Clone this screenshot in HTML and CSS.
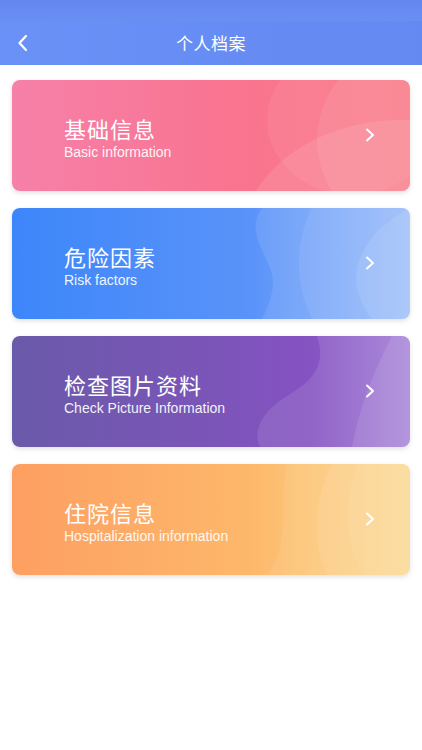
FILE: index.html
```html
<!DOCTYPE html>
<html lang="zh">
<head>
<meta charset="utf-8">
<title>个人档案</title>
<link rel="stylesheet" href="styles.css">
</head>
<body>
<header class="topbar">
  <div class="status"></div>
  <div class="navbar">
    <svg class="back" width="14" height="18" viewBox="0 0 14 18"><path d="M10 2 L3.5 9 L10 16" fill="none" stroke="#fff" stroke-width="2.2" stroke-linecap="round" stroke-linejoin="round"/></svg>
    <h1 class="title">个人档案</h1>
  </div>
</header>
<main class="list">
  <a class="card pink">
    <svg class="deco" viewBox="0 0 398 111" preserveAspectRatio="none">
      <ellipse cx="340" cy="40" rx="85" ry="75" fill="#fff" fill-opacity="0.06"/>
      <ellipse cx="400" cy="60" rx="95" ry="95" fill="#fff" fill-opacity="0.08"/>
      <ellipse cx="390" cy="160" rx="160" ry="120" fill="#fff" fill-opacity="0.1"/>
    </svg>
    <div class="text">
      <div class="cn">基础信息</div>
      <div class="en">Basic information</div>
    </div>
    <svg class="arrow" width="12" height="16" viewBox="0 0 12 16"><path d="M3 2.5 L9 8 L3 13.5" fill="none" stroke="#fff" stroke-width="2" stroke-linecap="round" stroke-linejoin="round"/></svg>
  </a>
  <a class="card blue">
    <svg class="deco" viewBox="0 0 398 111" preserveAspectRatio="none">
      <path d="M250 0 C235 20 250 40 258 60 C266 80 255 100 250 111 L398 111 L398 0 Z" fill="#fff" fill-opacity="0.1"/>
      <path d="M300 0 C280 40 285 80 300 111 L398 111 L398 0 Z" fill="#fff" fill-opacity="0.08"/>
      <path d="M398 0 C360 20 340 50 345 80 C348 95 355 105 360 111 L398 111 Z" fill="#fff" fill-opacity="0.1"/>
    </svg>
    <div class="text">
      <div class="cn">危险因素</div>
      <div class="en">Risk factors</div>
    </div>
    <svg class="arrow" width="12" height="16" viewBox="0 0 12 16"><path d="M3 2.5 L9 8 L3 13.5" fill="none" stroke="#fff" stroke-width="2" stroke-linecap="round" stroke-linejoin="round"/></svg>
  </a>
  <a class="card purple">
    <svg class="deco" viewBox="0 0 398 111" preserveAspectRatio="none">
      <path d="M305 0 C315 30 300 45 275 60 C250 75 240 95 248 111 L398 111 L398 0 Z" fill="#fff" fill-opacity="0.1"/>
      <path d="M380 0 C365 30 350 60 340 111 L398 111 L398 0 Z" fill="#fff" fill-opacity="0.1"/>
    </svg>
    <div class="text">
      <div class="cn">检查图片资料</div>
      <div class="en">Check Picture Information</div>
    </div>
    <svg class="arrow" width="12" height="16" viewBox="0 0 12 16"><path d="M3 2.5 L9 8 L3 13.5" fill="none" stroke="#fff" stroke-width="2" stroke-linecap="round" stroke-linejoin="round"/></svg>
  </a>
  <a class="card orange">
    <svg class="deco" viewBox="0 0 398 111" preserveAspectRatio="none">
      <path d="M275 0 C265 40 280 80 255 111 L398 111 L398 0 Z" fill="#fff" fill-opacity="0.07"/>
      <path d="M320 0 C300 40 300 80 315 111 L398 111 L398 0 Z" fill="#fff" fill-opacity="0.08"/>
      <path d="M345 0 C330 40 335 80 350 111 L398 111 L398 0 Z" fill="#fff" fill-opacity="0.06"/>
    </svg>
    <div class="text">
      <div class="cn">住院信息</div>
      <div class="en">Hospitalization information</div>
    </div>
    <svg class="arrow" width="12" height="16" viewBox="0 0 12 16"><path d="M3 2.5 L9 8 L3 13.5" fill="none" stroke="#fff" stroke-width="2" stroke-linecap="round" stroke-linejoin="round"/></svg>
  </a>
</main>
</body>
</html>
```

FILE: styles.css
```css
* { box-sizing: border-box; }
html, body { margin: 0; padding: 0; }
body {
  width: 422px;
  min-height: 750px;
  background: #ffffff;
  font-family: "Liberation Sans", "Noto Sans CJK SC", sans-serif;
}
.topbar {
  height: 65px;
  background: linear-gradient(90deg, #6991f6 0%, #6489f1 100%);
  display: flex;
  flex-direction: column;
}
.status {
  height: 21px;
  background: linear-gradient(180deg, #6386ee 0%, #6a8ff3 100%);
}
.navbar {
  position: relative;
  height: 44px;
  display: flex;
  align-items: center;
  justify-content: center;
}
.back {
  position: absolute;
  left: 16px;
  top: 13px;
}
.title {
  margin: 0;
  font-family: "Noto Sans CJK SC", sans-serif;
  font-weight: 400;
  font-size: 17px;
  color: #fff;
  letter-spacing: 0.5px;
  margin-top: -1px;
}
.list {
  padding: 15px 12px 0 12px;
  display: flex;
  flex-direction: column;
  gap: 17px;
}
.card {
  position: relative;
  height: 111px;
  border-radius: 8px;
  overflow: hidden;
  display: flex;
  align-items: center;
  padding: 0 0 0 52px;
  box-shadow: 0 2px 5px rgba(0,0,0,0.12);
}
.deco {
  position: absolute;
  inset: 0;
  width: 100%;
  height: 100%;
}
.text {
  position: relative;
  flex: 1;
  color: #fff;
}
.cn {
  font-family: "Noto Sans CJK SC", sans-serif;
  font-size: 22px;
  line-height: 32px;
  letter-spacing: 1px;
}
.en {
  font-family: "Liberation Sans", sans-serif;
  font-size: 14px;
  line-height: 16px;
  opacity: 0.92;
}
.arrow {
  position: relative;
  margin-right: 34px;
  margin-top: -2px;
}
.pink { background: linear-gradient(90deg, #f680a9 0%, #f97490 55%, #f97a85 100%); }
.blue { background: linear-gradient(90deg, #3d86fa 0%, #5a93f9 60%, #92b7f9 100%); }
.purple { background: linear-gradient(90deg, #6a5aaa 0%, #7b55b8 50%, #8552c2 75%, #a27dd6 100%); }
.orange { background: linear-gradient(90deg, #fd9f62 0%, #fdb86b 60%, #fccb7f 80%, #fbd68d 100%); }
```
